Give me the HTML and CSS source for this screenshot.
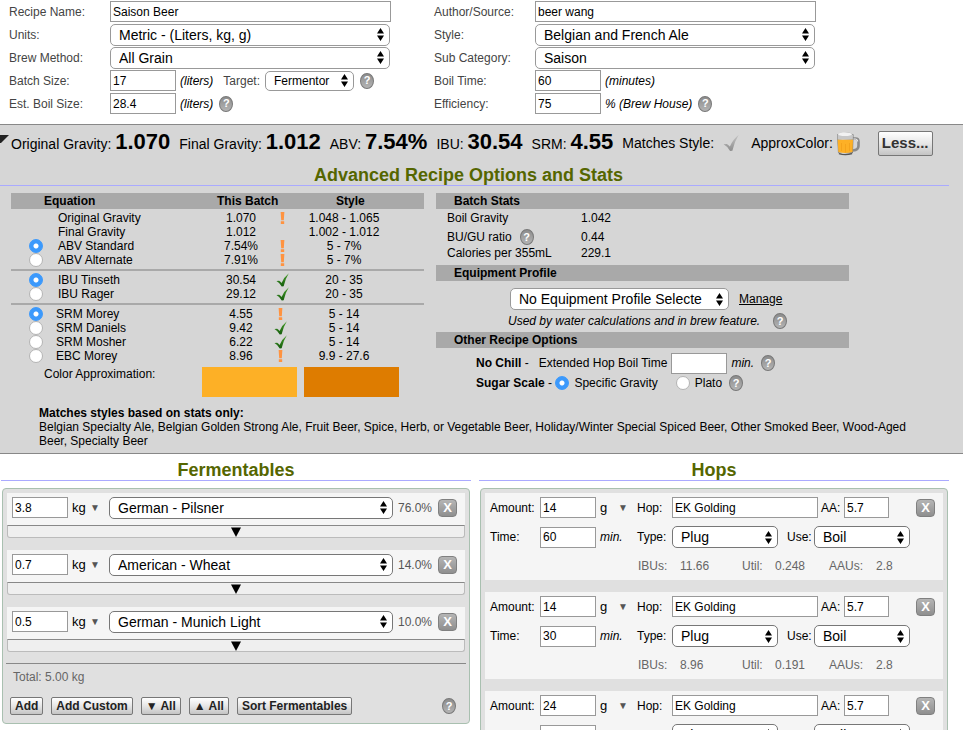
FILE: index.html
```html
<!DOCTYPE html>
<html lang="en">
<head>
<meta charset="utf-8">
<title>Recipe Editor - Saison Beer</title>
<link rel="stylesheet" href="styles.css">
</head>
<body>
<svg class="defs" aria-hidden="true">
  <defs>
    <linearGradient id="green" x1="0" y1="0" x2="0" y2="1"><stop offset="0" stop-color="#4aa02c"/><stop offset="1" stop-color="#145c0c"/></linearGradient>
    <linearGradient id="grey" x1="0" y1="0" x2="0" y2="1"><stop offset="0" stop-color="#c4c4c4"/><stop offset="1" stop-color="#8e8e8e"/></linearGradient>
    <linearGradient id="glass" x1="0" y1="0" x2="1" y2="0"><stop offset="0" stop-color="#777"/><stop offset=".35" stop-color="#e8e8e8"/><stop offset="1" stop-color="#707070"/></linearGradient>
    <symbol id="check" viewBox="0 0 14 15"><path d="M0.500 8.600 L3.400 8.300 Q5 9.200 6 10.600 Q8.600 4.500 13.800 0.300 Q9.800 6.500 8.200 14.200 L6.200 14.400 Q4.200 10.600 0.500 8.600Z"/></symbol>
    <symbol id="warn" viewBox="0 0 14 15"><path d="M5 1 H9 L8.400 9.800 H5.600Z M5.200 11 H8.800 V14 H5.200Z"/></symbol>
  </defs>
</svg>

<form class="recipe">
  <div class="fields">
    <div class="field"><label for="name">Recipe Name:</label><input class="wide" id="name" type="text" value="Saison Beer"></div>
    <div class="field"><label for="units">Units:</label><select class="wide" id="units"><option>Metric - (Liters, kg, g)</option></select></div>
    <div class="field"><label for="method">Brew Method:</label><select class="wide" id="method"><option>All Grain</option></select></div>
    <div class="field"><label for="batch">Batch Size:</label><input class="short" id="batch" type="text" value="17"><em>(liters)</em><label class="inline-label" for="target">Target:</label><select class="small" id="target"><option>Fermentor</option></select><button class="help" type="button" aria-label="Batch size help">?</button></div>
    <div class="field"><label for="boil">Est. Boil Size:</label><input class="short" id="boil" type="text" value="28.4"><em>(liters)</em><button class="help" type="button" aria-label="Boil size help">?</button></div>
  </div>
  <div class="fields">
    <div class="field"><label for="author">Author/Source:</label><input class="wide" id="author" type="text" value="beer wang"></div>
    <div class="field"><label for="style">Style:</label><select class="wide" id="style"><option>Belgian and French Ale</option></select></div>
    <div class="field"><label for="sub">Sub Category:</label><select class="wide" id="sub"><option>Saison</option></select></div>
    <div class="field"><label for="time">Boil Time:</label><input class="short" id="time" type="text" value="60"><em>(minutes)</em></div>
    <div class="field"><label for="eff">Efficiency:</label><input class="short" id="eff" type="text" value="75"><em>% (Brew House)</em><button class="help" type="button" aria-label="Efficiency help">?</button></div>
  </div>
</form>

<section class="stats">
  <div class="summary">
    <svg class="corner" viewBox="0 0 9 8" aria-hidden="true"><path d="M0 0H9L1 8H0Z"/></svg>
    <span>Original Gravity: <b>1.070</b></span>
    <span>Final Gravity: <b>1.012</b></span>
    <span>ABV: <b>7.54%</b></span>
    <span>IBU: <b>30.54</b></span>
    <span>SRM: <b>4.55</b></span>
    <span>Matches Style:</span>
    <svg class="match" viewBox="0 0 14 15" aria-hidden="true"><use href="#check" fill="url(#grey)"/></svg>
    <span class="approx">ApproxColor:
      <svg class="mug" viewBox="0 0 24 25" aria-hidden="true">
        <path d="M16 7.500h3.500q3 0 3 3v4.500q0 4-5.500 4.500" fill="none" stroke="#8a8a8a" stroke-width="2.600"/>
        <path d="M16.500 8h3q2.200 0 2.200 2.500" fill="none" stroke="#eee" stroke-width="1"/>
        <path d="M1 3.500Q9 -1 17.500 3.500L17 22Q9 26.500 2 22Z" fill="url(#glass)"/>
        <path d="M1.600 8.500H17L16.500 21Q9 23 2.400 21Z" fill="#fdb026"/>
        <path d="M5.500 12v8M9.500 13v8.500M13.500 12v8" stroke="#f4a31c" stroke-width="1"/>
        <path d="M1.500 3.800Q9 0.500 17 3.800L16.800 8.500H1.800Z" fill="#c8c8c8"/>
        <ellipse cx="9" cy="3.300" rx="7" ry="1.800" fill="#f2f2f2"/>
        <path d="M3 22.600Q9 24.600 16 22.600" stroke="#555" stroke-width="1.400" fill="none"/>
      </svg>
    </span>
    <button class="push less" type="button">Less...</button>
  </div>

  <h2 class="advanced-title">Advanced Recipe Options and Stats</h2>

  <div class="advanced">
    <table class="equations">
      <colgroup><col class="c-radio"><col><col class="c-value"><col class="c-mark"><col class="c-style"><col class="c-end"></colgroup>
      <thead><tr><th class="h-eq" colspan="2">Equation</th><th class="h-batch" colspan="2">This Batch</th><th class="h-style" colspan="2">Style</th></tr></thead>
      <tbody>
        <tr><td></td><td>Original Gravity</td><td>1.070</td><td><svg class="warn" viewBox="0 0 14 15"><use href="#warn"/></svg></td><td>1.048 - 1.065</td><td></td></tr>
        <tr><td></td><td>Final Gravity</td><td>1.012</td><td></td><td>1.002 - 1.012</td><td></td></tr>
        <tr><td><input type="radio" name="abv" id="abv1" checked></td><td><label for="abv1">ABV Standard</label></td><td>7.54%</td><td><svg class="warn" viewBox="0 0 14 15"><use href="#warn"/></svg></td><td>5 - 7%</td><td></td></tr>
        <tr><td><input type="radio" name="abv" id="abv2"></td><td><label for="abv2">ABV Alternate</label></td><td>7.91%</td><td><svg class="warn" viewBox="0 0 14 15"><use href="#warn"/></svg></td><td>5 - 7%</td><td></td></tr>
      </tbody>
      <tbody>
        <tr><td><input type="radio" name="ibu" id="ibu1" checked></td><td><label for="ibu1">IBU Tinseth</label></td><td>30.54</td><td><svg class="ok" viewBox="0 0 14 15"><use href="#check"/></svg></td><td>20 - 35</td><td></td></tr>
        <tr><td><input type="radio" name="ibu" id="ibu2"></td><td><label for="ibu2">IBU Rager</label></td><td>29.12</td><td><svg class="ok" viewBox="0 0 14 15"><use href="#check"/></svg></td><td>20 - 35</td><td></td></tr>
      </tbody>
      <tbody class="color-group">
        <tr><td><input type="radio" name="srm" id="srm1" checked></td><td><label for="srm1">SRM Morey</label></td><td>4.55</td><td><svg class="warn" viewBox="0 0 14 15"><use href="#warn"/></svg></td><td>5 - 14</td><td></td></tr>
        <tr><td><input type="radio" name="srm" id="srm2"></td><td><label for="srm2">SRM Daniels</label></td><td>9.42</td><td><svg class="ok" viewBox="0 0 14 15"><use href="#check"/></svg></td><td>5 - 14</td><td></td></tr>
        <tr><td><input type="radio" name="srm" id="srm3"></td><td><label for="srm3">SRM Mosher</label></td><td>6.22</td><td><svg class="ok" viewBox="0 0 14 15"><use href="#check"/></svg></td><td>5 - 14</td><td></td></tr>
        <tr><td><input type="radio" name="srm" id="srm4"></td><td><label for="srm4">EBC Morey</label></td><td>8.96</td><td><svg class="warn" viewBox="0 0 14 15"><use href="#warn"/></svg></td><td>9.9 - 27.6</td><td></td></tr>
      </tbody>
    </table>

    <div class="options">
      <h3>Batch Stats</h3>
      <dl class="batch">
        <dt>Boil Gravity</dt><dd>1.042</dd>
        <dt class="tall">BU/GU ratio <button class="help" type="button" aria-label="BU/GU help">?</button></dt><dd class="tall">0.44</dd>
        <dt>Calories per 355mL</dt><dd>229.1</dd>
      </dl>
      <h3>Equipment Profile</h3>
      <div class="equipment"><select class="profile" aria-label="Equipment profile"><option>No Equipment Profile Selecte</option></select><a href="#manage">Manage</a></div>
      <div class="hint"><em>Used by water calculations and in brew feature.</em><button class="help" type="button" aria-label="Equipment help">?</button></div>
      <h3>Other Recipe Options</h3>
      <div class="option chill"><b>No Chill</b>&nbsp;-<label for="chill">Extended Hop Boil Time</label><input id="chill" type="text"><em>min.</em><button class="help" type="button" aria-label="No chill help">?</button></div>
      <div class="option"><b>Sugar Scale</b>&nbsp;-&nbsp;<input type="radio" name="sugar" id="sg" checked><label for="sg">Specific Gravity</label><input class="plato" type="radio" name="sugar" id="plato"><label for="plato">Plato</label><button class="help" type="button" aria-label="Sugar scale help">?</button></div>
    </div>

    <div class="approximation">
      <span>Color Approximation:</span>
      <i class="swatch batch-color"></i><i class="swatch style-color"></i>
    </div>
  </div>

  <p class="matches"><b>Matches styles based on stats only:</b><br>Belgian Specialty Ale, Belgian Golden Strong Ale, Fruit Beer, Spice, Herb, or Vegetable Beer, Holiday/Winter Special Spiced Beer, Other Smoked Beer, Wood-Aged Beer, Specialty Beer</p>
</section>

<main class="ingredients">
  <section>
    <h2>Fermentables</h2>
    <div class="panel">
      <div class="grain">
        <div class="grain-row"><input type="text" aria-label="Amount" value="3.8"><span class="unit">kg <i>▼</i></span><select aria-label="Fermentable"><option>German - Pilsner</option></select><span class="percent">76.0%</span><button class="remove" type="button">X</button></div>
        <button class="expand" type="button" aria-label="Expand"><svg viewBox="0 0 10 10"><path d="M0 0.500H10L5 10Z"/></svg></button>
      </div>
      <div class="grain">
        <div class="grain-row"><input type="text" aria-label="Amount" value="0.7"><span class="unit">kg <i>▼</i></span><select aria-label="Fermentable"><option>American - Wheat</option></select><span class="percent">14.0%</span><button class="remove" type="button">X</button></div>
        <button class="expand" type="button" aria-label="Expand"><svg viewBox="0 0 10 10"><path d="M0 0.500H10L5 10Z"/></svg></button>
      </div>
      <div class="grain">
        <div class="grain-row"><input type="text" aria-label="Amount" value="0.5"><span class="unit">kg <i>▼</i></span><select aria-label="Fermentable"><option>German - Munich Light</option></select><span class="percent">10.0%</span><button class="remove" type="button">X</button></div>
        <button class="expand" type="button" aria-label="Expand"><svg viewBox="0 0 10 10"><path d="M0 0.500H10L5 10Z"/></svg></button>
      </div>
      <p class="total">Total: 5.00 kg</p>
      <div class="actions">
        <button class="push" type="button">Add</button>
        <button class="push" type="button">Add Custom</button>
        <button class="push" type="button">▼ All</button>
        <button class="push" type="button">▲ All</button>
        <button class="push" type="button">Sort Fermentables</button>
        <button class="help" type="button" aria-label="Fermentables help">?</button>
      </div>
    </div>
  </section>

  <section>
    <h2>Hops</h2>
    <div class="panel">
      <div class="hop">
        <div class="hop-row"><label for="a1">Amount:</label><input id="a1" type="text" value="14"><span class="unit">g <i>▼</i></span><label class="mid" for="h1">Hop:</label><input class="grow" id="h1" type="text" value="EK Golding"><label class="aa" for="aa1">AA:</label><input class="acid" id="aa1" type="text" value="5.7"><button class="remove" type="button">X</button></div>
        <div class="hop-row second"><label for="t1">Time:</label><input id="t1" type="text" value="60"><em class="unit">min.</em><label class="mid" for="y1">Type:</label><select class="grow" id="y1"><option>Plug</option></select><label class="use" for="u1">Use:</label><select class="use-select" id="u1"><option>Boil</option></select></div>
        <div class="hop-stats"><span>IBUs:</span><span>11.66</span><span>Util:</span><span>0.248</span><span>AAUs:</span><span>2.8</span></div>
      </div>
      <div class="hop">
        <div class="hop-row"><label for="a2">Amount:</label><input id="a2" type="text" value="14"><span class="unit">g <i>▼</i></span><label class="mid" for="h2">Hop:</label><input class="grow" id="h2" type="text" value="EK Golding"><label class="aa" for="aa2">AA:</label><input class="acid" id="aa2" type="text" value="5.7"><button class="remove" type="button">X</button></div>
        <div class="hop-row second"><label for="t2">Time:</label><input id="t2" type="text" value="30"><em class="unit">min.</em><label class="mid" for="y2">Type:</label><select class="grow" id="y2"><option>Plug</option></select><label class="use" for="u2">Use:</label><select class="use-select" id="u2"><option>Boil</option></select></div>
        <div class="hop-stats"><span>IBUs:</span><span>8.96</span><span>Util:</span><span>0.191</span><span>AAUs:</span><span>2.8</span></div>
      </div>
      <div class="hop">
        <div class="hop-row"><label for="a3">Amount:</label><input id="a3" type="text" value="24"><span class="unit">g <i>▼</i></span><label class="mid" for="h3">Hop:</label><input class="grow" id="h3" type="text" value="EK Golding"><label class="aa" for="aa3">AA:</label><input class="acid" id="aa3" type="text" value="5.7"><button class="remove" type="button">X</button></div>
        <div class="hop-row second"><label for="t3"></label><input id="t3" type="text"><em class="unit"></em><label class="mid" for="y3"></label><select class="grow" id="y3"><option>Plug</option></select><label class="use" for="u3"></label><select class="use-select" id="u3"><option>Boil</option></select></div>
      </div>
    </div>
  </section>
</main>
</body>
</html>
```
FILE: styles.css
```css
* { box-sizing: border-box; }

html { scrollbar-width: none; }

body {
  margin: 0;
  background: #fff;
  color: #000;
  font: 12px/14px "Liberation Sans", Arial, sans-serif;
}

.defs { position: absolute; width: 0; height: 0; }

input, select, button { font-family: inherit; margin: 0; flex: none; }

input[type="text"] {
  height: 21px;
  padding: 0 2px;
  border: 1px solid #999;
  background: #fff;
  color: #000;
  font-size: 12px;
}

select {
  appearance: none;
  height: 22px;
  padding: 0 20px 0 8px;
  border: 1px solid #999;
  border-radius: 5px;
  color: #000;
  font-size: 14px;
  background: #fff url("data:image/svg+xml,%3Csvg xmlns='http://www.w3.org/2000/svg' width='7' height='13'%3E%3Cpath d='M0 5.500L3.500 0L7 5.500ZM0 7.500L3.500 13L7 7.500Z'/%3E%3C/svg%3E") no-repeat right 5px center;
}

input[type="radio"] {
  appearance: none;
  display: block;
  width: 14px;
  height: 14px;
  border: 1px solid #b4b4b4;
  border-radius: 50%;
  background: #fff;
}

input[type="radio"]:checked {
  border-color: #3b99fc;
  background: radial-gradient(circle, #fff 2px, #3b99fc 3px);
}

.help {
  width: 14px;
  height: 16px;
  padding: 0;
  border: 1px solid #777;
  border-radius: 50%;
  background: linear-gradient(#8c8c8c, #b4b4b4);
  color: #fff;
  font-size: 11px;
  font-weight: bold;
  line-height: 13px;
}

h2 {
  margin: 0;
  padding-top: 7px;
  border-bottom: 1px solid #aaf;
  color: #560;
  font-size: 18px;
  line-height: 19px;
  text-align: center;
}

/* Recipe form */
.recipe {
  display: grid;
  grid-template-columns: 425px 1fr;
  padding: 0 0 9px 9px;
}

.field { display: flex; align-items: center; height: 23px; }
.field label { width: 101px; color: #444; }
.field .wide { width: 281px; }
.field select.wide { width: 280px; }
.field .short { width: 66px; }
.field em { margin-left: 4px; }
.field .inline-label { width: auto; margin: 0 5px 0 10px; }
.field .small { width: 89px; height: 20px; font-size: 12px; }
.field .help { margin-left: 6px; }

/* Statistics */
.stats {
  border-top: 1px solid #888;
  border-bottom: 1px solid #888;
  background: #d6d6d6;
}

.summary {
  position: relative;
  display: flex;
  align-items: center;
  gap: 9px;
  height: 36px;
  padding-left: 11px;
  font-size: 14px;
  line-height: 24px;
  white-space: nowrap;
}

.summary b { font-size: 22px; }
.corner { position: absolute; left: 0; top: 10px; width: 9px; height: 8px; fill: #222; }
.match { width: 16px; height: 18px; }
.approx { display: flex; align-items: center; gap: 3px; margin-left: 3px; }
.mug { width: 24px; height: 25px; }

.push {
  height: 18px;
  padding: 0 4px;
  border: 1px solid #777;
  border-radius: 2px;
  background: linear-gradient(#fff, #e6e6e6 50%, #c4c4c4);
  color: #222;
  font-size: 12px;
  font-weight: bold;
  line-height: 16px;
}

.less { height: 25px; margin-left: 9px; padding: 0 3px; font-size: 15px; color: #333; }

.advanced-title { margin-right: 14px; padding: 5px 12px 0 0; }

.advanced {
  display: grid;
  grid-template-columns: 1fr 1fr;
  grid-template-rows: auto 1fr;
  column-gap: 12px;
  padding: 7px 114px 0 11px;
}

.equations {
  width: 100%;
  table-layout: fixed;
  border-spacing: 0;
  line-height: 14px;
}

.c-radio { width: 47px; }
.c-value { width: 62px; }
.c-mark { width: 20px; }
.c-style { width: 104px; }
.c-end { width: 28px; }

.equations th {
  height: 16px;
  padding: 0;
  background: #a9a9a9;
  text-align: left;
}

.equations .h-eq { padding-left: 33px; }
.equations .h-batch { padding-left: 7px; }
.equations .h-style { padding-left: 44px; }

.equations td { height: 14px; padding: 0; text-align: center; }
.equations td:nth-child(2) { text-align: left; }
.equations td:first-child { padding-left: 18px; }
.equations tbody tr:first-child td { height: 16px; padding-top: 2px; }
.equations tbody:not(:last-child) tr:last-child td { height: 18px; padding-bottom: 2px; border-bottom: 2px solid #a9a9a9; }
.color-group td:nth-child(2) { position: relative; left: -2px; }
.equations svg { display: block; width: 15px; height: 14px; margin: 0 auto; }
.color-group svg { margin-left: 1px; }
.warn { fill: #ff9340; }
.ok { fill: url(#green); overflow: visible; }

.approximation {
  grid-area: 2 / 1;
  display: flex;
  padding: 4px 25px 0 33px;
}

.approximation span { margin-right: auto; }
.swatch { width: 95px; height: 30px; margin-left: 7px; }
.batch-color { background: #fdb026; }
.style-color { background: #de7c00; }

.options { grid-area: 1 / 2 / 3 / 3; }
.options h3 {
  margin: 0;
  padding-left: 18px;
  background: #a9a9a9;
  font-size: 12px;
  line-height: 16px;
}

.batch {
  display: grid;
  grid-template-columns: 134px 1fr;
  margin: 0;
  padding: 2px 0 5px 11px;
}

.batch dd { margin: 0; }
.batch dt, .batch dd { display: flex; align-items: center; height: 14px; }
.batch .tall { height: 21px; padding-top: 3px; }
.batch .help { margin-left: 8px; }

.equipment { display: flex; align-items: center; padding: 7px 0 2px 74px; }
.equipment a { margin-left: 10px; color: #000; }
.profile { width: 219px; }
.hint { display: flex; align-items: center; height: 20px; padding: 0 0 2px 72px; }
.hint .help { margin-left: 13px; }

.option { display: flex; align-items: center; height: 14px; padding-left: 40px; }
.option.chill { height: 28px; padding-top: 2px; }
.option .help { margin-left: 7px; }
.chill label { margin: 0 4px 0 10px; }
.chill input { width: 56px; }
.chill em { margin-left: 4px; }
.option input[type="radio"] + label { margin-left: 5px; }
.option .plato { margin-left: 18px; }

.matches { margin: 0; padding: 9px 50px 5px 39px; }

/* Ingredients */
.ingredients {
  display: grid;
  grid-template-columns: 1fr 1fr;
  gap: 8px;
  align-items: start;
  padding: 0 14px 0 1px;
}

.panel {
  margin: 7px 1px 0;
  padding: 4px;
  border: 1px solid #a9c0b0;
  border-radius: 4px;
  background: #e0e0e0;
}

.panel select { border-color: #777; }

.grain { margin-bottom: 12px; }
.grain-row {
  display: flex;
  align-items: center;
  height: 32px;
  padding: 0 8px 3px 5px;
  background: #f5f5f5;
}

.grain-row input { width: 56px; }
.grain-row select { flex: 1; min-width: 0; }
.grain-row .unit { width: 41px; padding-left: 4px; font-size: 13px; }
.percent { width: 45px; padding-left: 5px; color: #555; }
.unit { display: flex; align-items: center; justify-content: space-between; padding-right: 9px; }
.unit i { color: #555; font-size: 10px; font-style: normal; }

.remove {
  width: 19px;
  height: 18px;
  padding: 0;
  border: 1px solid #808080;
  border-radius: 4px;
  background: linear-gradient(#b5b5b5, #8f8f8f);
  color: #fff;
  font-size: 13px;
  font-weight: bold;
  line-height: 16px;
}

.expand {
  display: flex;
  align-items: center;
  justify-content: center;
  width: 100%;
  height: 13px;
  padding: 0;
  border: 1px solid #bbb;
  border-top-color: #888;
  border-radius: 0 0 3px 3px;
  background: #efefef;
}

.expand svg { width: 10px; height: 10px; }

.total {
  margin: -1px -1px 0;
  padding: 6px 7px 13px;
  border-top: 1px solid #888;
  color: #666;
}

.actions { display: flex; align-items: center; gap: 8px; padding: 0 9px 4px 3px; }
.actions .help { margin-left: auto; }

.hop {
  height: 87px;
  margin-bottom: 12px;
  padding: 4px 8px 0 5px;
  background: #f5f5f5;
}

.hop-row { display: flex; align-items: center; height: 21px; }
.hop-row label { width: 50px; }
.hop-row input { width: 56px; }
.hop-row .unit { width: 41px; padding-left: 4px; }
.hop-row span.unit { font-size: 13px; }
.hop-row .mid { width: 35px; }
.hop-row .grow { flex: 1; width: 0; min-width: 0; }
.hop-row .aa { width: 26px; padding-left: 3px; }
.hop-row .acid { width: 45px; margin-right: 27px; }
.hop-row.second { height: 22px; margin-top: 8px; padding-right: 25px; }
.hop-row .use { width: 36px; padding-left: 9px; }
.hop-row .use-select { width: 96px; }

.hop-stats {
  display: grid;
  grid-template-columns: 42px 62px 33px 54px 47px auto;
  padding: 11px 0 0 148px;
  color: #666;
}
```
